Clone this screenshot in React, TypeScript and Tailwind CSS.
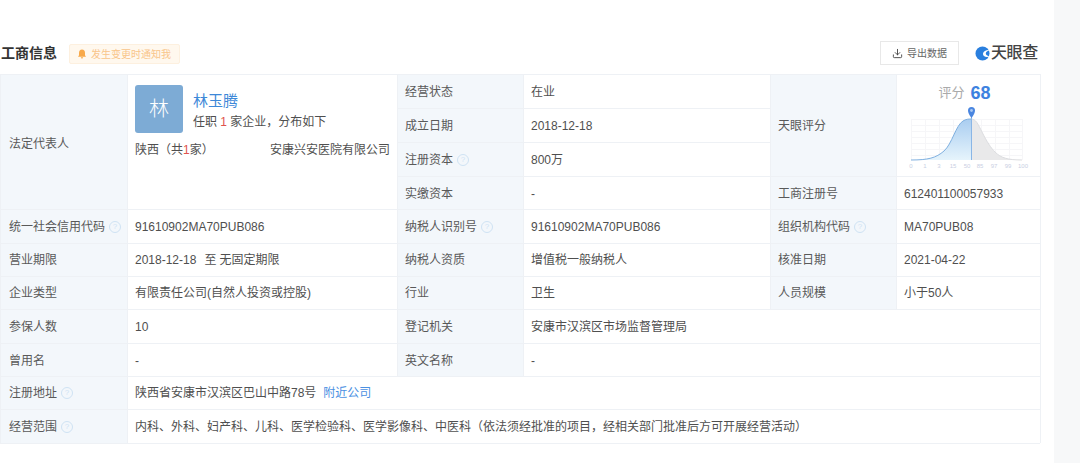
import { Download } from 'lucide-react';
import type { ReactNode } from 'react';

function Help() {
  return (
    <span className="ml-[4px] inline-flex h-[12px] w-[12px] items-center justify-center rounded-full border border-[#cfe3f4] text-[8px] leading-none text-[#cfe3f4]">
      ?
    </span>
  );
}

function Label({ children, help, className = '' }: { children: ReactNode; help?: boolean; className?: string }) {
  return (
    <div className={`flex items-center border-t border-r border-[#eef1f5] bg-[#f3f7fb] pl-[7px] text-[12px] text-[#595959] ${className}`}>
      {children}
      {help && <Help />}
    </div>
  );
}

function Value({ children, className = '' }: { children: ReactNode; className?: string }) {
  return (
    <div className={`flex items-center border-t border-r border-[#eef1f5] pl-[7px] text-[12px] text-[#4f4f4f] ${className}`}>
      {children}
    </div>
  );
}

function ScoreChart() {
  const hLines = [15, 21, 27, 33, 39, 45, 51];
  const vLines = [3, 17, 31, 45, 59, 73, 87, 101, 114];
  const ticks: [string, number][] = [['0', 3], ['1', 17], ['3', 31], ['15', 45], ['50', 59], ['85', 72], ['97', 86], ['99', 100], ['100', 115]];
  return (
    <svg width="122" height="66" viewBox="0 0 122 66" className="ml-[11px] self-start">
      <defs>
        <linearGradient id="blue" x1="0" y1="0" x2="0" y2="1">
          <stop offset="0" stopColor="#a9cdf0" />
          <stop offset="1" stopColor="#e6f4fc" />
        </linearGradient>
      </defs>
      {hLines.map((y) => (
        <line key={y} x1="3" x2="114" y1={y + 0.5} y2={y + 0.5} stroke="#f6f6f8" strokeWidth="1" />
      ))}
      {vLines.map((x) => (
        <line key={x} x1={x + 0.5} x2={x + 0.5} y1="15" y2="56" stroke="#f6f6f8" strokeWidth="1" />
      ))}
      <path d="M63 15 C68 15 70 20 74 28 C79 38 83 44 87 48 C93 54 100 56 114 56 L63 56 Z" fill="#e9e9ea" />
      <path d="M3 56 C20 56 28 54 36 47 C44 40 48 21 55 17 C58 15 61 15 63 15 L63 56 Z" fill="url(#blue)" />
      <path d="M3 56 C20 56 28 54 36 47 C44 40 48 21 55 17 C58 15 61 15 63 15" fill="none" stroke="#7fb0e0" strokeWidth="1" />
      <path d="M63 15 C68 15 70 20 74 28 C79 38 83 44 87 48 C93 54 100 56 114 56" fill="none" stroke="#dcdde0" strokeWidth="1" />
      <line x1="63.5" x2="63.5" y1="12" y2="56" stroke="#8ab6e6" strokeWidth="1" />
      <path d="M63.500 14 C61 10.500 60 8.500 60 6.500 A3.500 3.500 0 0 1 67 6.500 C67 8.500 66 10.500 63.500 14 Z" fill="#4a86e0" />
      <circle cx="63.500" cy="6.500" r="1.400" fill="#a9c8f2" />
      <g fill="#c9cfe3" fontSize="6" fontFamily="'Liberation Sans', sans-serif" textAnchor="middle">
        {ticks.map(([t, x]) => (
          <text key={t} x={x} y="64">{t}</text>
        ))}
      </g>
    </svg>
  );
}

export default function App() {
  return (
    <div className="flex h-[463px] w-[1080px] overflow-hidden bg-white font-['Liberation_Sans','Noto_Sans_CJK_SC',sans-serif]">
      <div className="w-[1054px] pt-[41px]">
        {/* Header */}
        <div className="flex h-[33px] w-[1038px] items-start">
          <span className="mt-[2px] pl-[1px] text-[14px] font-bold leading-[20px] text-[#333]">工商信息</span>
          <span className="ml-[12px] mt-[3px] flex h-[20px] w-[111px] items-center rounded-[2px] border border-[#fdf0df] bg-[#fff8ee] pl-[7px] text-[10px] text-[#f9c58a]">
            <svg width="10" height="10" viewBox="0 0 10 10" className="mr-[4px]">
              <path d="M5 .5C3 .5 2 2 2 4v2.200L1 7.800h8L8 6.200V4C8 2 7 .5 5 .5ZM3.800 8.300a1.200 1.200 0 0 0 2.400 0Z" fill="#f8a94a" />
            </svg>
            发生变更时通知我
          </span>
          <span className="ml-auto flex h-[24px] w-[79px] items-center justify-center border border-[#e8e8e8] text-[10px] text-[#666]">
            <Download size={11} className="mr-[4px] text-[#444]" />
            导出数据
          </span>
          <span className="ml-[16px] flex items-center">
            <svg width="15" height="15" viewBox="0 0 15 15" className="mr-[1px]">
              <circle cx="7.500" cy="7.500" r="7" fill="#2a7fde" />
              <path d="M15 4C11.500 3.500 8.500 5 8 7.500 7.700 9.500 9.500 11 12 11 13 11 14 10.800 15 10.300 13 10.200 11 9.500 10.800 7.800 10.600 6 12.500 4.800 15 4Z" fill="#fff" />
            </svg>
            <span className="text-[16px] font-medium leading-[24px] tracking-[-0.3px] text-[#444]">天眼查</span>
          </span>
        </div>

        {/* Table */}
        <div className="grid w-[1040px] grid-cols-[127px_270px_126px_247px_126px_144px] grid-rows-[34px_34px_34px_33px_34px_33px_33px_34px_33px_33px_34px] border-b border-l border-[#eef1f5] text-[12px]">
          <Label className="row-span-4 pl-[8px] pt-[3px]">法定代表人</Label>
          <div className="row-span-4 border-t border-r border-[#eef1f5] px-[7px] pt-[10px] text-[#4f4f4f]">
            <div className="flex">
              <div className="flex h-[48px] w-[48px] items-center justify-center rounded-[3px] bg-[#7dabd5] text-[20px] font-light text-white">林</div>
              <div className="ml-[10px]">
                <div className="mt-[5px] text-[15px] leading-[22px] text-[#3d88d8]">林玉腾</div>
                <div className="mt-[1px] text-[12px] leading-[18px]">任职 <span className="text-[#e0534d]">1</span> 家企业，分布如下</div>
              </div>
            </div>
            <div className="mt-[8px] flex justify-between leading-[18px]">
              <span>陕西（共<span className="text-[#e0534d]">1</span>家）</span>
              <span>安康兴安医院有限公司</span>
            </div>
          </div>
          <Label>经营状态</Label>
          <Value>在业</Value>
          <Label className="row-span-3">天眼评分</Label>
          <div className="row-span-3 flex flex-col items-center border-t border-r border-[#eef1f5] pt-[7px]">
            <div className="flex h-[22px] items-center pr-[8px]">
              <span className="text-[13px] text-[#aaa]">评分</span>
              <span className="ml-[6px] text-[18px] font-bold text-[#3d82e0]">68</span>
            </div>
            <ScoreChart />
          </div>

          <Label>成立日期</Label>
          <Value>2018-12-18</Value>
          <Label help>注册资本</Label>
          <Value>800万</Value>
          <Label className="pt-[1px]">实缴资本</Label>
          <Value className="pt-[1px]">-</Value>
          <Label className="pt-[1px]">工商注册号</Label>
          <Value className="pt-[1px]">612401100057933</Value>

          <Label help className="pl-[8px]">统一社会信用代码</Label>
          <Value>91610902MA70PUB086</Value>
          <Label help>纳税人识别号</Label>
          <Value>91610902MA70PUB086</Value>
          <Label help>组织机构代码</Label>
          <Value>MA70PUB08</Value>

          <Label className="pl-[8px]">营业期限</Label>
          <Value>2018-12-18<span className="ml-[8px] mr-[3px]">至</span>无固定期限</Value>
          <Label>纳税人资质</Label>
          <Value>增值税一般纳税人</Value>
          <Label>核准日期</Label>
          <Value>2021-04-22</Value>

          <Label className="pl-[8px]">企业类型</Label>
          <Value>有限责任公司(自然人投资或控股)</Value>
          <Label>行业</Label>
          <Value>卫生</Value>
          <Label>人员规模</Label>
          <Value>小于50人</Value>

          <Label className="pl-[8px]">参保人数</Label>
          <Value>10</Value>
          <Label>登记机关</Label>
          <Value className="col-span-3">安康市汉滨区市场监督管理局</Value>

          <Label className="pl-[8px] pt-[1px]">曾用名</Label>
          <Value className="pt-[1px]">-</Value>
          <Label className="pt-[1px]">英文名称</Label>
          <Value className="col-span-3 pt-[1px]">-</Value>

          <Label help className="pl-[8px]">注册地址</Label>
          <Value className="col-span-5">
            陕西省安康市汉滨区巴山中路78号
            <span className="ml-[7px] text-[#4a90e2]">附近公司</span>
          </Value>

          <Label help className="pl-[8px]">经营范围</Label>
          <Value className="col-span-5">内科、外科、妇产科、儿科、医学检验科、医学影像科、中医科（依法须经批准的项目，经相关部门批准后方可开展经营活动）</Value>
        </div>
      </div>
      <div className="flex-1 bg-[#f7f8f9]" />
    </div>
  );
}
